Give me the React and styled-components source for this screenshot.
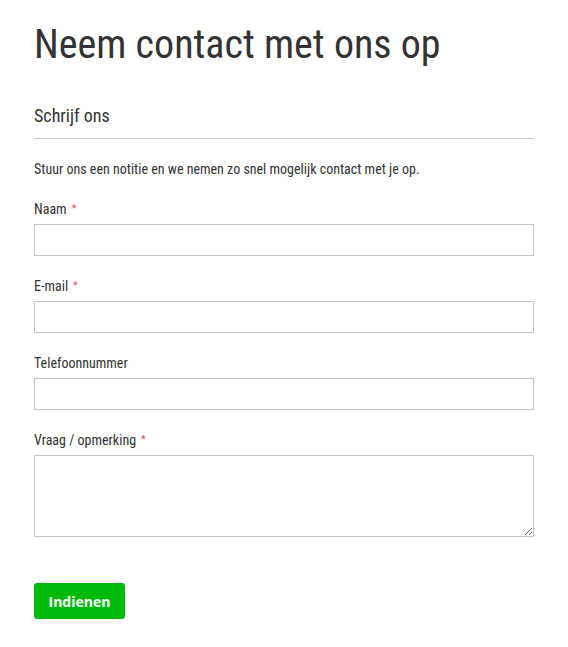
import styled, { createGlobalStyle } from "styled-components";

const GlobalStyle = createGlobalStyle`
  body {
    margin: 0;
    background: #fff;
    font-family: "Roboto Condensed", "DejaVu Sans Condensed", "Roboto", sans-serif;
    color: #333;
  }
`;

const Page = styled.main`
  width: 500px;
  padding: 20px 34px 28px;
`;

const Title = styled.h1`
  font-size: 40px;
  font-weight: 400;
  line-height: 50px;
  margin: 0 0 35px;
  color: #333;
`;

const Section = styled.h2`
  font-size: 18px;
  font-weight: 400;
  line-height: 22px;
  margin: 0;
  padding-bottom: 11px;
  border-bottom: 1px solid #ccc;
`;

const Intro = styled.p`
  font-size: 14px;
  line-height: 20px;
  margin: 20px 0 21px;
`;

const Form = styled.form`
  display: flex;
  flex-direction: column;
  gap: 21px;
`;

const Field = styled.div`
  display: flex;
  flex-direction: column;
  gap: 6px;
`;

const Label = styled.label`
  font-size: 14px;
  line-height: 18px;
  color: #333;
`;

const Star = styled.span`
  color: #e8515a;
  font-size: 11px;
  margin-left: 5px;
  vertical-align: 2px;
`;

const Input = styled.input`
  box-sizing: border-box;
  width: 100%;
  height: 32px;
  border: 1px solid #c4c4c4;
  border-radius: 0;
  margin: 0;
`;

const TextArea = styled.textarea`
  box-sizing: border-box;
  width: 100%;
  height: 82px;
  border: 1px solid #c4c4c4;
  border-radius: 0;
  margin: 0;
  display: block;
`;

const Submit = styled.button`
  align-self: flex-start;
  margin-top: 25px;
  height: 36px;
  width: 91px;
  border: none;
  border-radius: 3px;
  background: #00b90b;
  color: #fff;
  font-family: "Open Sans", sans-serif;
  font-weight: 700;
  font-size: 14px;
`;

const fields = [
  { id: "naam", label: "Naam", required: true },
  { id: "email", label: "E-mail", required: true },
  { id: "tel", label: "Telefoonnummer" },
];

export default function App() {
  return (
    <Page>
      <GlobalStyle />
      <Title>Neem contact met ons op</Title>
      <Section>Schrijf ons</Section>
      <Intro>Stuur ons een notitie en we nemen zo snel mogelijk contact met je op.</Intro>
      <Form>
        {fields.map((f) => (
          <Field key={f.id}>
            <Label htmlFor={f.id}>
              {f.label}
              {f.required && <Star>*</Star>}
            </Label>
            <Input id={f.id} />
          </Field>
        ))}
        <Field>
          <Label htmlFor="vraag">
            Vraag / opmerking<Star>*</Star>
          </Label>
          <TextArea id="vraag" />
        </Field>
        <Submit type="button">Indienen</Submit>
      </Form>
    </Page>
  );
}
